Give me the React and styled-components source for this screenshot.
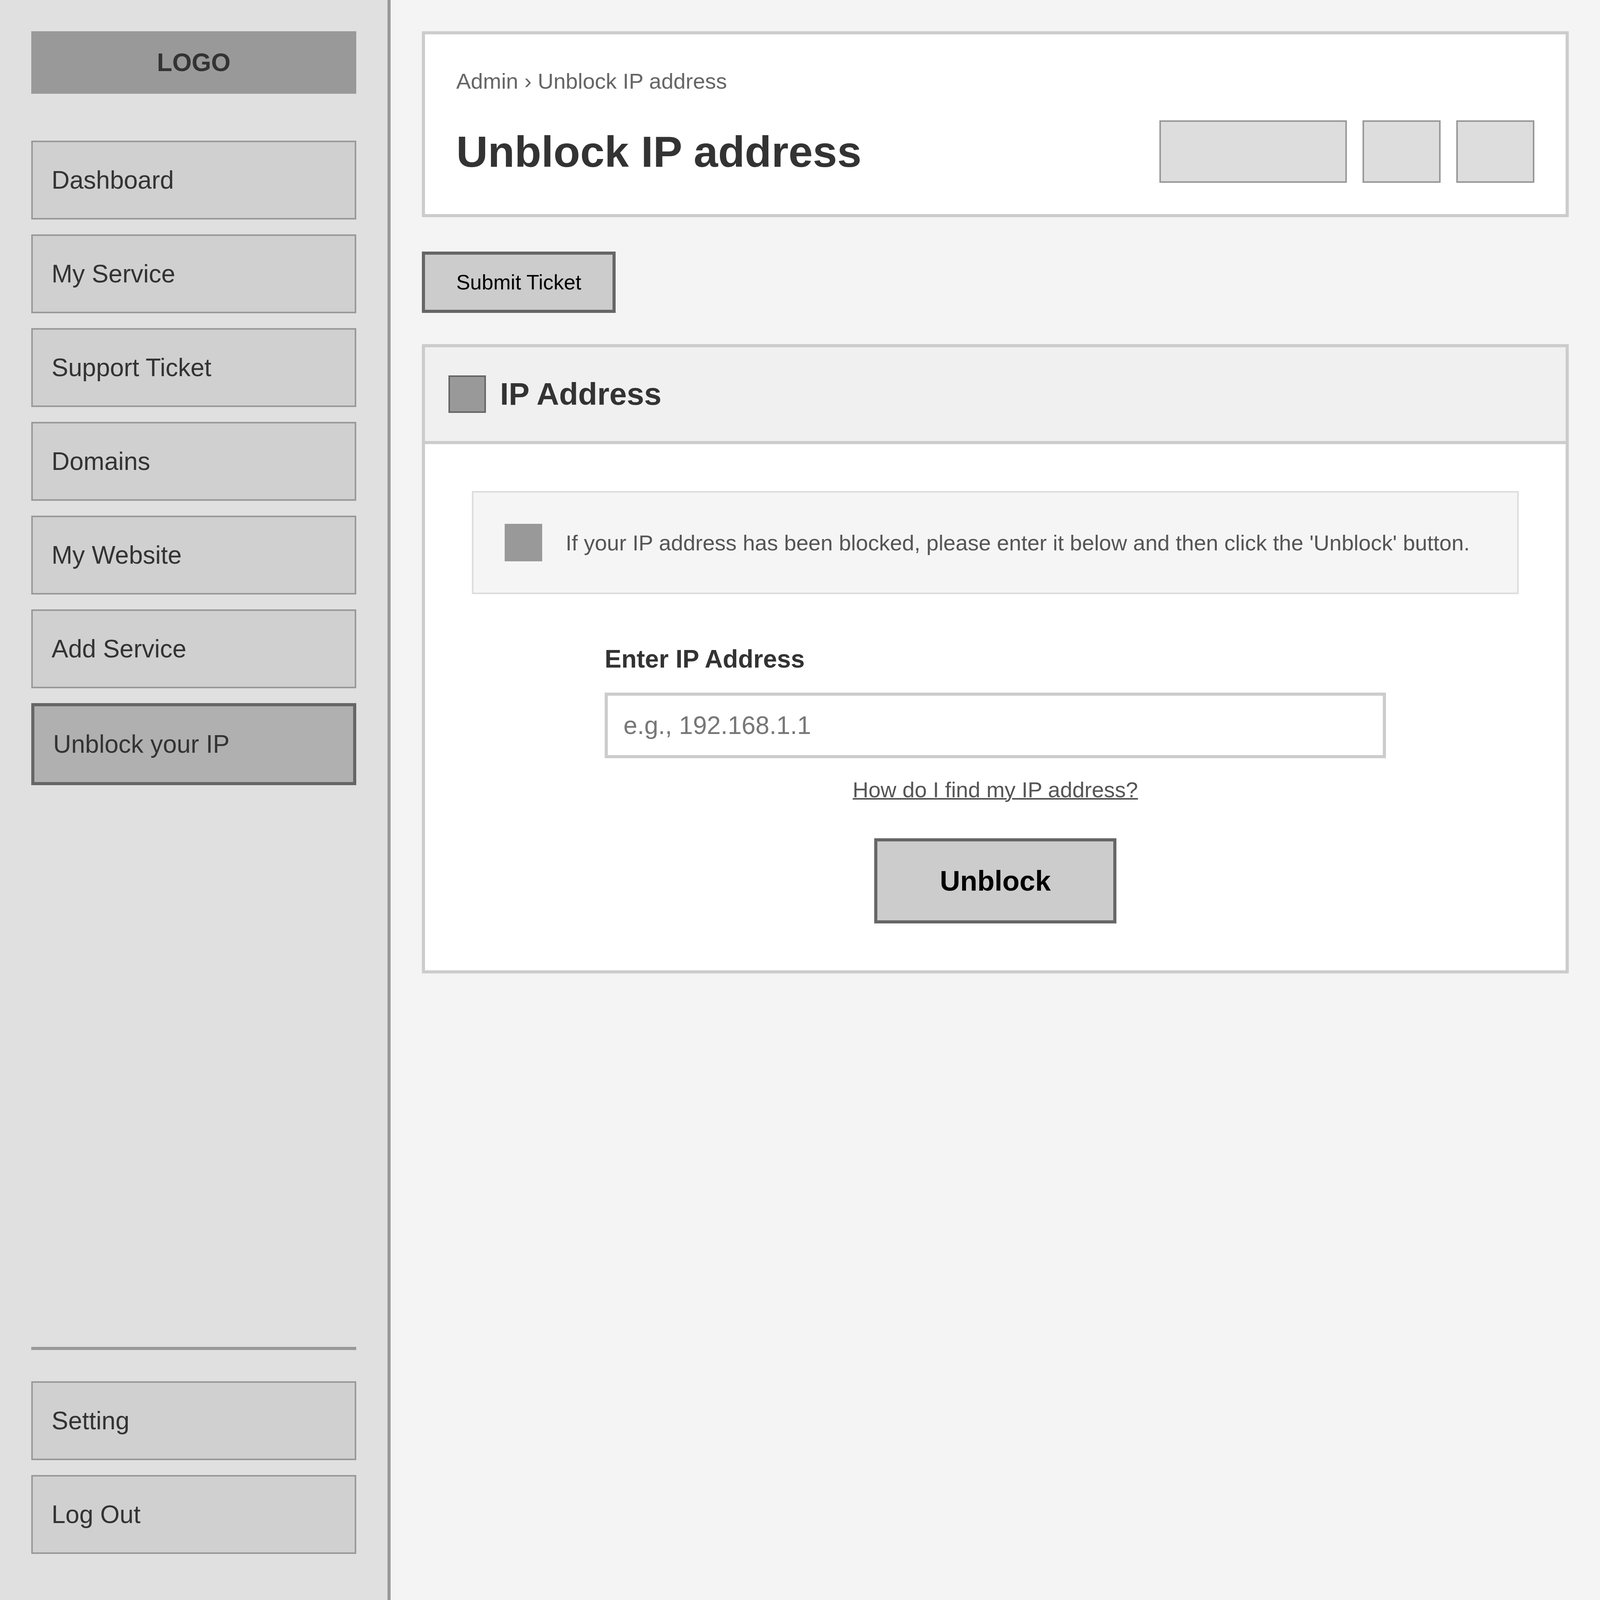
import React from 'react';
import styled, { createGlobalStyle } from 'styled-components';

const GlobalStyle = createGlobalStyle`
  * {
    box-sizing: border-box;
  }
  html, body {
    margin: 0;
    padding: 0;
  }
  body {
    font-family: "Liberation Sans", Arial, sans-serif;
    background: #f4f4f4;
    color: #333;
  }
`;

const NAV_ITEMS = ['Dashboard', 'My Service', 'Support Ticket', 'Domains', 'My Website', 'Add Service'];

function App() {
  return (
    <>
      <GlobalStyle />
      <Layout>
        <Sidebar>
          <Logo>LOGO</Logo>
          <Nav>
            {NAV_ITEMS.map((item) => (
              <NavItem key={item}>{item}</NavItem>
            ))}
            <NavItem active>Unblock your IP</NavItem>
          </Nav>
          <SidebarFooter>
            <NavItem>Setting</NavItem>
            <NavItem>Log Out</NavItem>
          </SidebarFooter>
        </Sidebar>

        <Main>
          <HeaderCard>
            <Breadcrumb>Admin › Unblock IP address</Breadcrumb>
            <TitleRow>
              <PageTitle>Unblock IP address</PageTitle>
              <HeaderActions>
                <ActionBox wide />
                <ActionBox />
                <ActionBox />
              </HeaderActions>
            </TitleRow>
          </HeaderCard>

          <SubmitButton>Submit Ticket</SubmitButton>

          <Panel>
            <PanelHeader>
              <IconSquare bordered />
              <PanelTitle>IP Address</PanelTitle>
            </PanelHeader>
            <PanelBody>
              <InfoBox>
                <IconSquare />
                <InfoText>
                  If your IP address has been blocked, please enter it below and then click the 'Unblock' button.
                </InfoText>
              </InfoBox>

              <Form onSubmit={(e) => e.preventDefault()}>
                <Label htmlFor="ip">Enter IP Address</Label>
                <Input id="ip" type="text" placeholder="e.g., 192.168.1.1" />
                <HelpLink href="#">How do I find my IP address?</HelpLink>
                <UnblockButton type="submit">Unblock</UnblockButton>
              </Form>
            </PanelBody>
          </Panel>
        </Main>
      </Layout>
    </>
  );
}

const Layout = styled.div`
  display: flex;
  min-height: 100vh;
`;

const Sidebar = styled.aside`
  width: 1000px;
  flex-shrink: 0;
  min-height: 100vh;
  background: #e0e0e0;
  border-right: 8px solid #999;
  padding: 80px;
  display: flex;
  flex-direction: column;
`;

const Logo = styled.div`
  height: 160px;
  background: #999;
  color: #333;
  font-size: 64px;
  font-weight: bold;
  display: flex;
  align-items: center;
  justify-content: center;
  margin-bottom: 120px;
`;

const Nav = styled.nav`
  display: flex;
  flex-direction: column;
`;

const NavItem = styled.div`
  height: ${(p) => (p.active ? '210px' : '202px')};
  margin-bottom: 38px;
  display: flex;
  align-items: center;
  padding: 0 48px;
  font-size: 64px;
  color: #333;
  background: ${(p) => (p.active ? '#b0b0b0' : '#d0d0d0')};
  border: ${(p) => (p.active ? '8px solid #666' : '4px solid #999')};
`;

const SidebarFooter = styled.div`
  margin-top: auto;
  border-top: 8px solid #999;
  padding-top: 80px;
`;

const Main = styled.main`
  flex: 1;
  padding: 80px;
  display: flex;
  flex-direction: column;
  align-items: flex-start;
`;

const HeaderCard = styled.header`
  align-self: stretch;
  background: #fff;
  border: 8px solid #ccc;
  padding: 80px;
`;

const Breadcrumb = styled.div`
  font-size: 56px;
  line-height: 80px;
  color: #666;
`;

const TitleRow = styled.div`
  display: flex;
  align-items: center;
  justify-content: space-between;
  margin-top: 60px;
`;

const PageTitle = styled.h1`
  margin: 0;
  font-size: 112px;
  font-weight: bold;
  color: #333;
`;

const HeaderActions = styled.div`
  display: flex;
  gap: 40px;
`;

const ActionBox = styled.div`
  width: ${(p) => (p.wide ? '480px' : '200px')};
  height: 160px;
  background: #ddd;
  border: 4px solid #999;
`;

const SubmitButton = styled.button`
  margin: 88px 0 80px;
  padding: 40px 80px;
  background: #ccc;
  border: 8px solid #666;
  font-family: inherit;
  font-size: 53.33px;
  color: #000;
`;

const Panel = styled.section`
  align-self: stretch;
  background: #fff;
  border: 8px solid #ccc;
`;

const PanelHeader = styled.div`
  display: flex;
  align-items: center;
  gap: 36px;
  padding: 72px 60px;
  background: #f0f0f0;
  border-bottom: 8px solid #ccc;
`;

const IconSquare = styled.span`
  width: 96px;
  height: 96px;
  flex-shrink: 0;
  background: #999;
  border: ${(p) => (p.bordered ? '4px solid #666' : 'none')};
`;

const PanelTitle = styled.h2`
  margin: 0;
  font-size: 80px;
  line-height: 96px;
  font-weight: bold;
  color: #333;
`;

const PanelBody = styled.div`
  padding: 120px;
`;

const InfoBox = styled.div`
  display: flex;
  align-items: center;
  gap: 60px;
  padding: 80px;
  background: #f5f5f5;
  border: 4px solid #ddd;
`;

const InfoText = styled.p`
  margin: 0;
  font-size: 56px;
  color: #555;
`;

const Form = styled.form`
  width: 2000px;
  margin: 128px auto 0;
  display: flex;
  flex-direction: column;
`;

const Label = styled.label`
  font-size: 64px;
  line-height: 76px;
  font-weight: bold;
  color: #333;
  margin-bottom: 48px;
`;

const Input = styled.input`
  height: 168px;
  padding: 0 40px;
  border: 8px solid #ccc;
  font-family: inherit;
  font-size: 64px;
  color: #333;
  outline: none;

  &::placeholder {
    color: #777;
  }
`;

const HelpLink = styled.a`
  align-self: center;
  margin-top: 48px;
  font-size: 56px;
  color: #555;
  text-decoration: underline;
  text-decoration-thickness: 4px;
`;

const UnblockButton = styled.button`
  align-self: center;
  margin-top: 92px;
  padding: 60px 160px;
  background: #ccc;
  border: 8px solid #666;
  font-family: inherit;
  font-size: 72px;
  font-weight: bold;
  color: #000;
`;

export default App;
